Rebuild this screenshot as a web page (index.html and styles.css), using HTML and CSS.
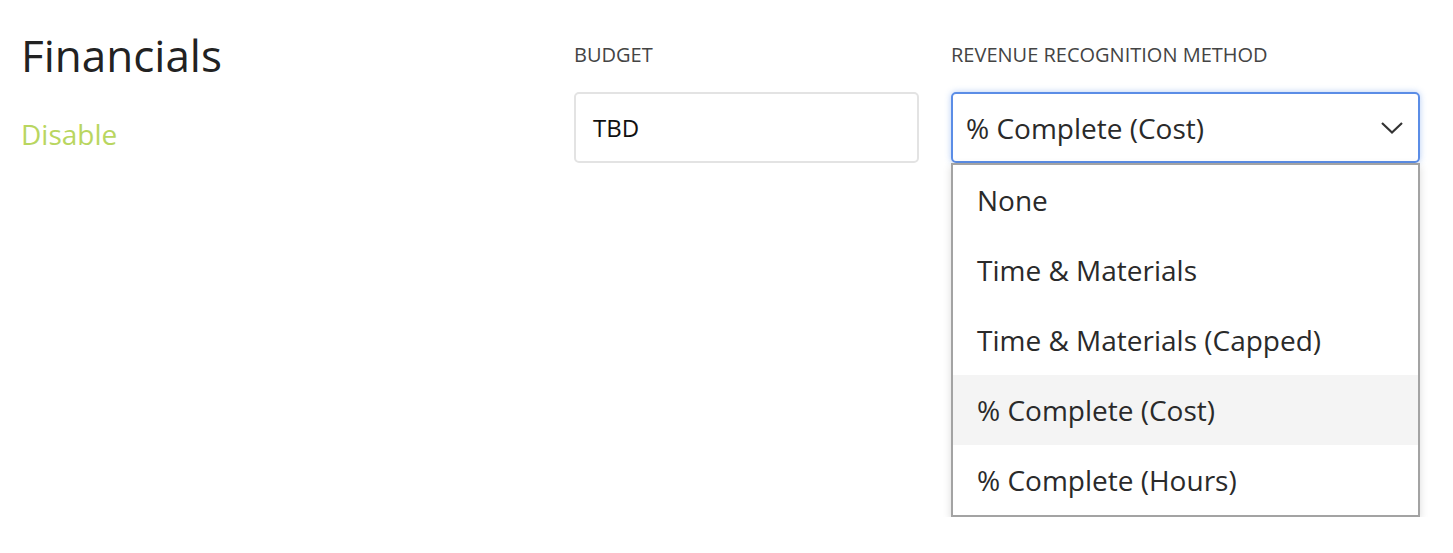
FILE: index.html
```html
<!DOCTYPE html>
<html lang="en">
<head>
    <meta charset="UTF-8">
    <title>Financials</title>
    <link rel="stylesheet" href="styles.css">
</head>
<body>
    <div class="section">
        <div class="section-head">
            <h2>Financials</h2>
            <a class="toggle" href="#">Disable</a>
        </div>
        <div class="fields">
            <div class="field budget">
                <div class="field-label">Budget</div>
                <div class="input">TBD</div>
            </div>
            <div class="field method">
                <div class="field-label">Revenue Recognition Method</div>
                <div class="select">
                    <span>% Complete (Cost)</span>
                    <svg class="chevron" width="24" height="14" viewBox="0 0 24 14">
                        <path d="M2 2 L12 11.5 L22 2" fill="none" stroke="#333" stroke-width="2.2"/>
                    </svg>
                </div>
                <div class="options">
                    <div class="option">None</div>
                    <div class="option">Time &amp; Materials</div>
                    <div class="option">Time &amp; Materials (Capped)</div>
                    <div class="option current">% Complete (Cost)</div>
                    <div class="option">% Complete (Hours)</div>
                </div>
            </div>
        </div>
    </div>
</body>
</html>
```

FILE: styles.css
```css
* {
    box-sizing: border-box;
    margin: 0;
    padding: 0;
}

body {
    font-family: 'Open Sans', sans-serif;
    background: #fff;
    color: #222;
}

.section {
    display: flex;
    align-items: flex-start;
    padding: 30px 33px 0 21px;
}

.section-head {
    width: 553px;
}

h2 {
    font-size: 44px;
    font-weight: 400;
    line-height: 50px;
    color: #222;
}

.toggle {
    display: inline-block;
    margin-top: 36px;
    font-size: 28px;
    line-height: 36px;
    color: #b9d660;
    text-decoration: none;
}

.fields {
    display: flex;
    align-items: flex-start;
    gap: 32px;
}

.budget {
    width: 345px;
}

.method {
    width: 469px;
}

.field-label {
    font-size: 20px;
    line-height: 26px;
    text-transform: uppercase;
    color: #444;
    margin-top: 12px;
    margin-bottom: 24px;
}

.input {
    height: 71px;
    border: 2px solid #e3e3e3;
    border-radius: 5px;
    padding: 0 17px;
    display: flex;
    align-items: center;
    font-size: 24px;
    color: #111;
}

.select {
    height: 71px;
    margin-top: 1px;
    border: 2px solid #5b8de6;
    border-radius: 5px;
    box-shadow: 0 0 6px rgba(91, 141, 230, 0.45);
    padding: 0 14px 0 13px;
    display: flex;
    align-items: center;
    justify-content: space-between;
    font-size: 28px;
    color: #2a2a2a;
}

.options {
    background: #fff;
    border: 2px solid #a3a3a3;
    box-shadow: 0 3px 8px rgba(0, 0, 0, 0.15);
}

.option {
    height: 70px;
    display: flex;
    align-items: center;
    padding-left: 24px;
    font-size: 28px;
    color: #2a2a2a;
}

.option.current {
    background: #f4f4f4;
}
```
